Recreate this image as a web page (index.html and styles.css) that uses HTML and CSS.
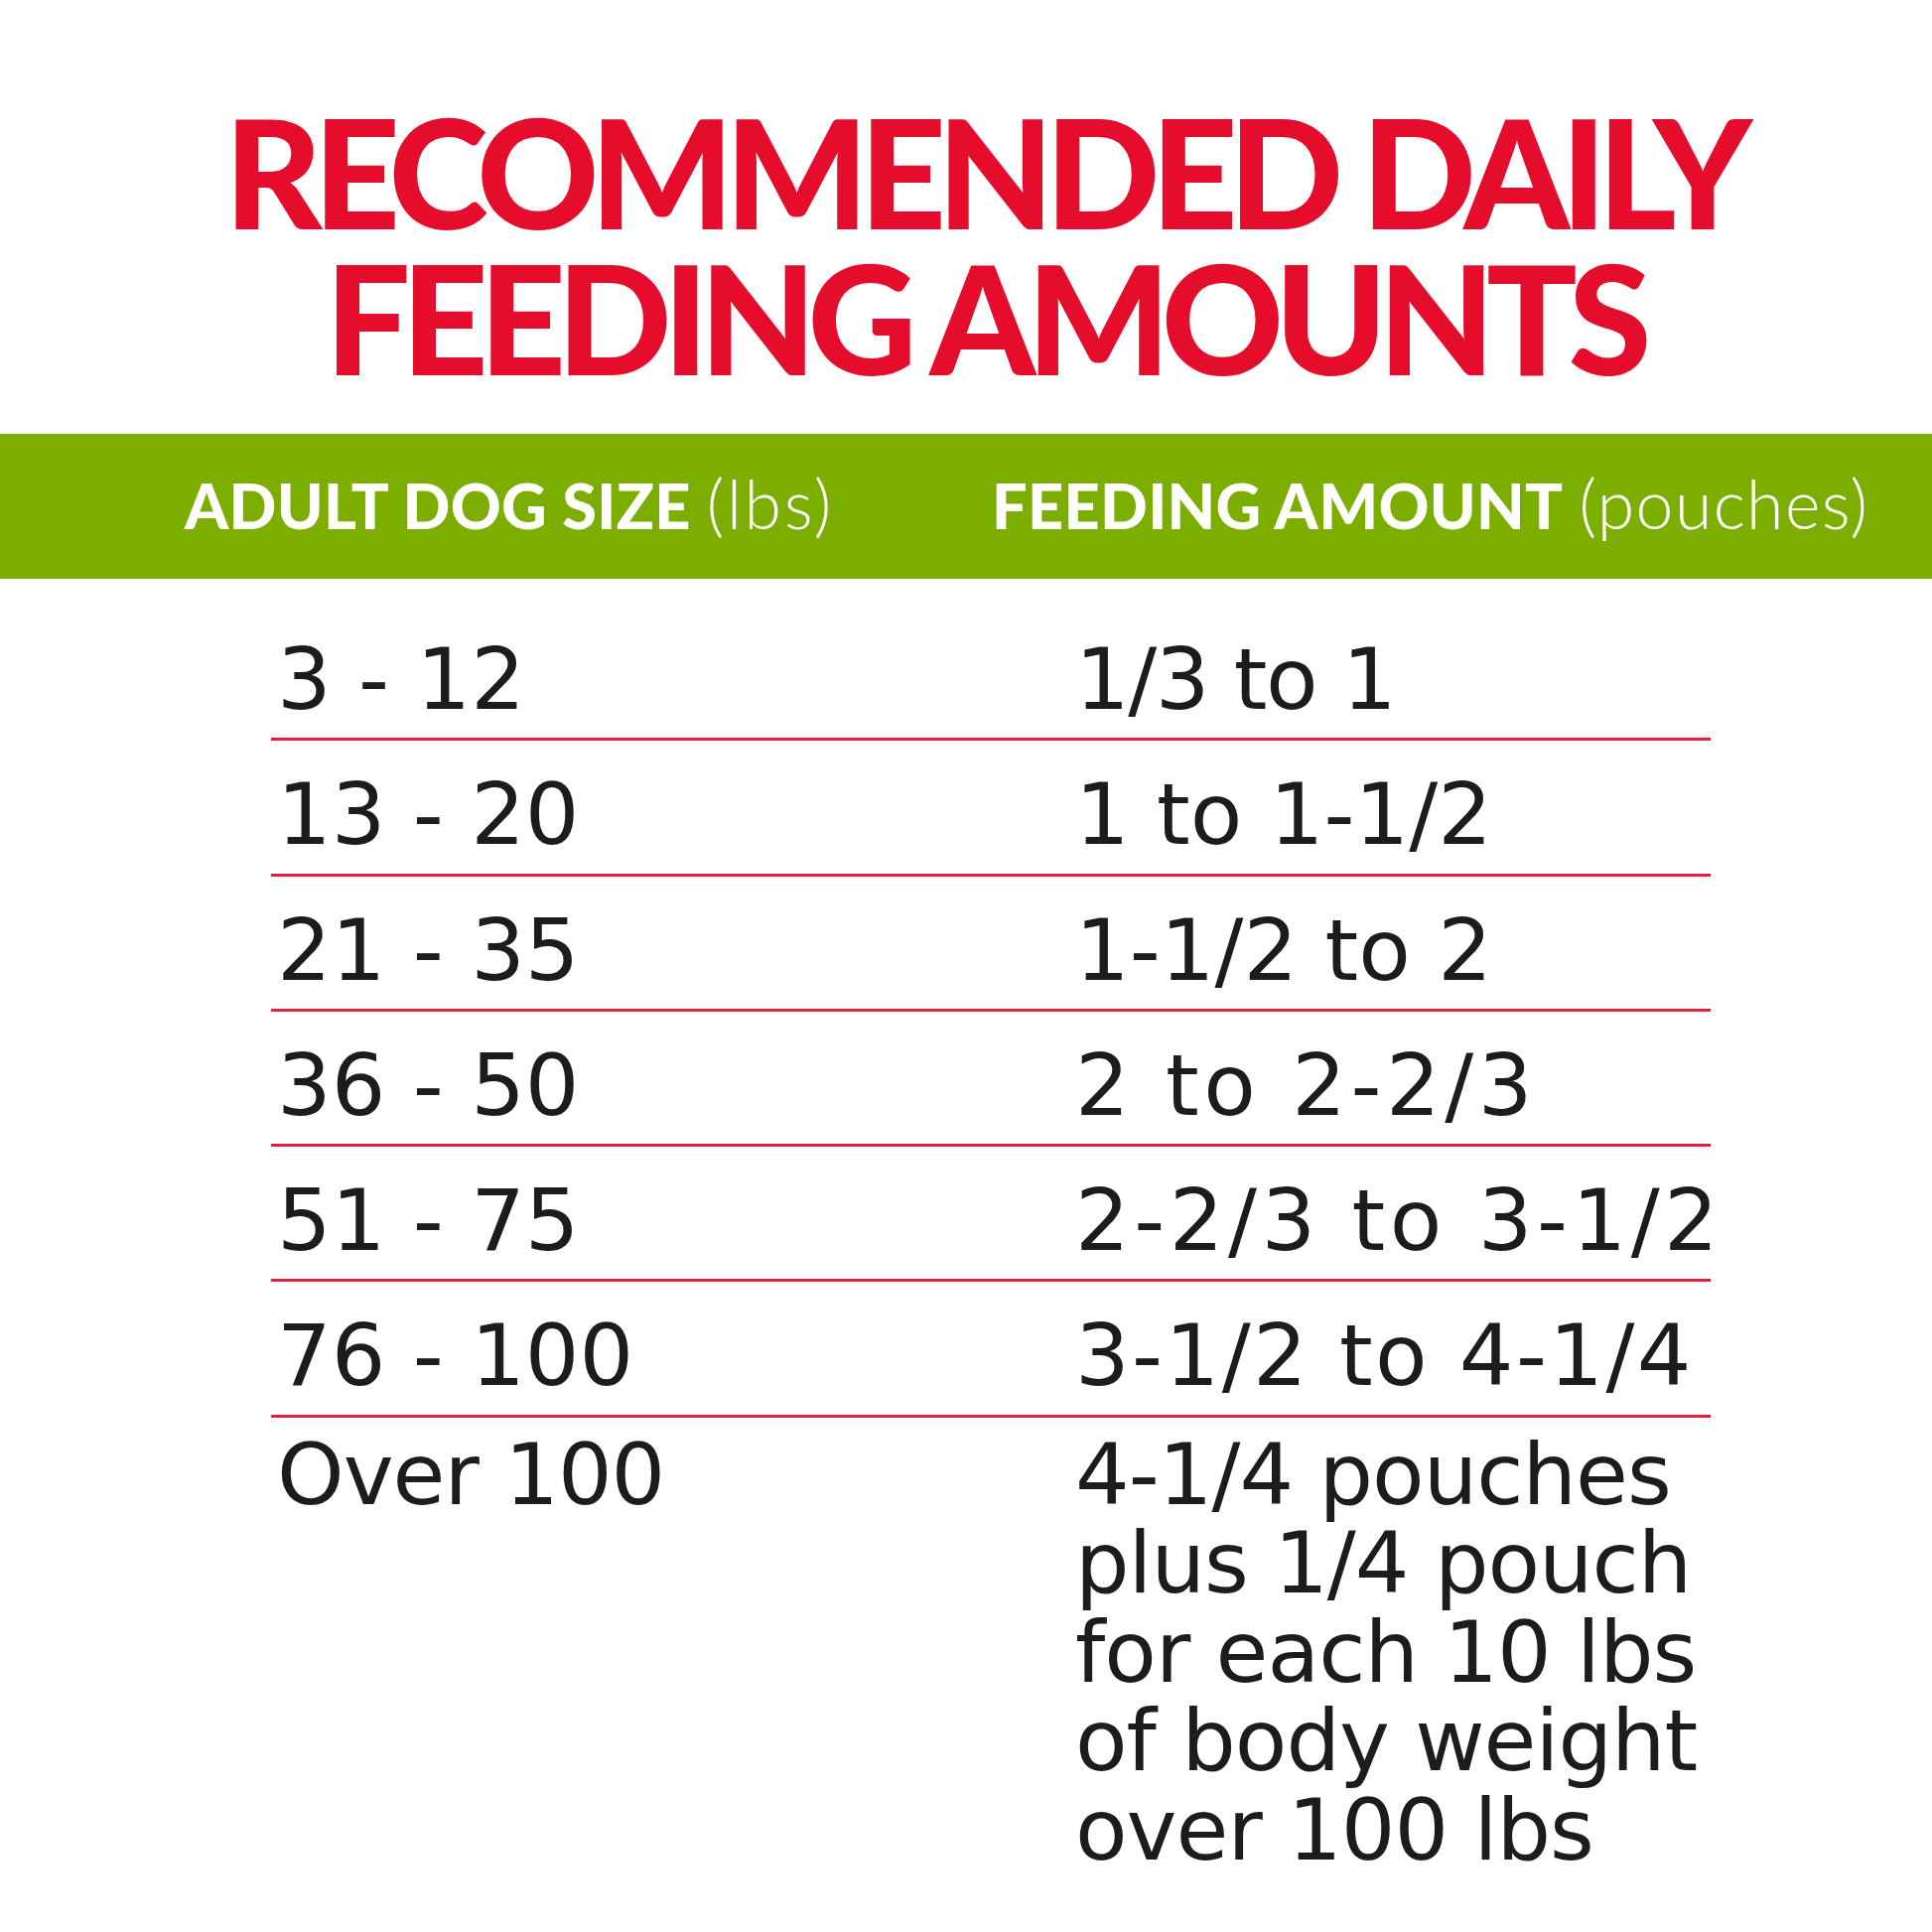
FILE: index.html
```html
<!DOCTYPE html>
<html lang="en">
<head>
<meta charset="utf-8">
<title>Recommended Daily Feeding Amounts</title>
<link rel="stylesheet" href="styles.css">
</head>
<body>
<main class="chart">
  <h1 class="title">
    <span class="title-line">RECOMMENDED DAILY</span>
    <span class="title-line">FEEDING AMOUNTS</span>
  </h1>
  <div class="head-bar">
    <div class="head-cell head-size"><b>ADULT DOG SIZE</b> <span class="unit">(lbs)</span></div>
    <div class="head-cell head-amount"><b>FEEDING AMOUNT</b> <span class="unit">(pouches)</span></div>
  </div>
  <div class="rows">
    <div class="row"><div class="cell">3 - 12</div><div class="cell tight">1/3 to 1</div></div>
    <div class="row"><div class="cell">13 - 20</div><div class="cell">1 to 1-1/2</div></div>
    <div class="row"><div class="cell">21 - 35</div><div class="cell">1-1/2 to 2</div></div>
    <div class="row"><div class="cell">36 - 50</div><div class="cell wide">2 to 2-2/3</div></div>
    <div class="row"><div class="cell">51 - 75</div><div class="cell wide">2-2/3 to 3-1/2</div></div>
    <div class="row"><div class="cell">76 - 100</div><div class="cell mid">3-1/2 to 4-1/4</div></div>
    <div class="row row-last"><div class="cell">Over 100</div><div class="cell cell-multi">4-1/4 pouches<br>plus 1/4 pouch<br>for each 10 lbs<br>of body weight<br>over 100 lbs</div></div>
  </div>
</main>
</body>
</html>
```
FILE: styles.css
```css
html, body {
  margin: 0;
  padding: 0;
  background: #ffffff;
}
body {
  width: 1946px;
  height: 1946px;
  overflow: hidden;
}
.chart {
  display: flex;
  flex-direction: column;
}
.title {
  margin: 0;
  padding: 99px 0 0 36px;
  display: flex;
  flex-direction: column;
  align-items: center;
  font-family: Lato, "Open Sans", sans-serif;
  font-weight: 900;
  font-size: 152px;
  line-height: 147px;
  color: #e60c2b;
  letter-spacing: -9px;
}
.title-line {
  display: block;
  white-space: nowrap;
}
.head-bar {
  margin-top: 44px;
  height: 146px;
  background: #7cae00;
  display: grid;
  grid-template-columns: 999px 1fr;
  align-items: center;
  color: #ffffff;
  font-family: Lato, "Open Sans", sans-serif;
  font-size: 63px;
  white-space: nowrap;
}
.head-cell {
  padding-bottom: 8px;
}
.head-cell b {
  font-weight: 900;
  letter-spacing: 0.3px;
}
.head-cell .unit {
  font-weight: 300;
  font-size: 68px;
  letter-spacing: 1.4px;
}
.head-size {
  padding-left: 186px;
}
.head-size .unit {
  letter-spacing: 2.6px;
}
.rows {
  margin: 27px 0 0 273px;
  width: 1450px;
  display: flex;
  flex-direction: column;
  font-family: "DejaVu Sans", sans-serif;
  font-size: 86px;
  line-height: 89px;
  color: #1c1c1c;
}
.row {
  display: grid;
  grid-template-columns: 804px 1fr;
  height: 133.3px;
  border-bottom: 3px solid #e3203c;
}
.cell {
  padding: 30px 0 0 6px;
  white-space: nowrap;
}
.cell.tight {
  letter-spacing: -1.5px;
}
.cell.wide {
  letter-spacing: 4.5px;
}
.cell.mid {
  letter-spacing: 2.4px;
}
.row-last {
  height: auto;
  border-bottom: none;
}
.row-last .cell {
  padding-top: 13px;
  line-height: 89.5px;
  letter-spacing: -1px;
}
```
